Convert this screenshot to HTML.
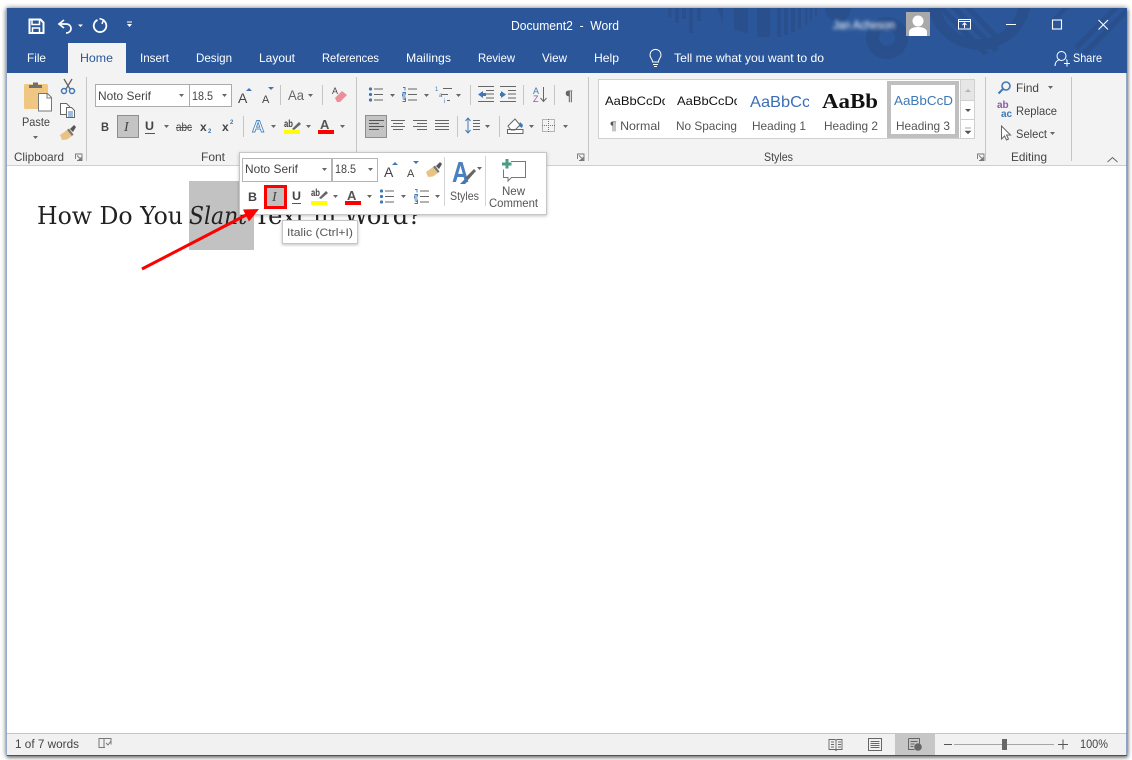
<!DOCTYPE html>
<html><head><meta charset="utf-8"><title>Document2 - Word</title>
<style>
html,body{margin:0;padding:0;background:#fff;width:1132px;height:760px;overflow:hidden}
#w{position:absolute;left:6px;top:8px;width:1121px;height:748px;box-shadow:0 0 5px rgba(0,0,0,.55),1px 2px 3px rgba(0,0,0,.3);background:#fff}
svg{position:absolute;left:0;top:0}
text{font-family:"Liberation Sans",sans-serif;font-size:12px;fill:#444}
.w{fill:#fff}
.l{fill:#555}
</style></head><body><div id="w"></div>
<svg width="1132" height="760" viewBox="0 0 1132 760" xmlns="http://www.w3.org/2000/svg">
<defs>
<path id="dd" d="M0 0h5l-2.5 3z" fill="#666"/>
<clipPath id="tb"><rect x="7" y="8" width="1120" height="65"/></clipPath>
<filter id="bl" x="-10%" y="-50%" width="120%" height="200%"><feGaussianBlur stdDeviation="1.8"/></filter>
<filter id="sh" x="-5%" y="-10%" width="110%" height="125%"><feDropShadow dx="0" dy="1" stdDeviation="1.5" flood-color="#000" flood-opacity=".25"/></filter>
<g id="bul"><g fill="#3f78b5"><circle cx="1.5" cy="1.5" r="1.6"/><circle cx="1.5" cy="7" r="1.6"/><circle cx="1.5" cy="12.5" r="1.6"/></g><path d="M5 1.5h9M5 7h9M5 12.5h9" stroke="#666" fill="none"/></g>
<g id="num"><path d="M6 1.5h9M6 7h9M6 12.5h9" stroke="#666" fill="none"/><path d="M1 0h2v3M0.5 5h3v1.5h-3v2h3M0.5 10.5h3v1.5h-2h2v2h-3" stroke="#3f78b5" fill="none" stroke-width=".9"/></g>
<g id="brush"><path d="M0 10l7-5 5 6-5 3.5-5 .5z" fill="#e9c383"/><path d="M7 5l5 6 1.5-1.5-4.5-6z" fill="#777"/><path d="M10 4l4-4 2 2-3 5z" fill="#555"/></g>
</defs>

<!-- window frame -->
<rect x="6.5" y="8" width="1120.5" height="748" fill="#2b579a"/>
<!-- title pattern -->
<g clip-path="url(#tb)" fill="#294f8c">
<path d="M668 8h3.500v9h-3.500zM675 8h4v15h-4zM682 8h4v11h-4zM689 8h4v25h-4zM697 8h4v13h-4z"/>
<path d="M717 8h6v15zM734 8h14v26l-14-5zM757 8h13v29h-13zM777 8h4v29h-4zM784 8h4v27h-4zM791 8h4v24h-4zM798 8h3v21h-3zM805 8h2.500v17h-2.500zM810 8h2v13h-2zM815 8h2v7h-2z"/>
<path d="M825 8h26c-1 9-6 14-13 14s-12-5-13-14z"/>
<path fill-rule="evenodd" d="M887 17a21 21 0 1 0 .1 0zM887 30a8 8 0 1 1-.1 0z"/>
<path fill-rule="evenodd" d="M928 8a52 52 0 0 0 102 0h-12a40 40 0 0 1-78 0z"/>
<path d="M938 8h7l44 45-6 2zM951 8h7l41 41-5 3zM965 8h7l32 33-4 4zM1003 8"/>
<path d="M1051 20l12-12h6l-16 16zM1074 46l38-38h7l-41 42zM1082 52l44-44v7l-39 40z"/>
</g>

<!-- QAT -->
<g fill="none" stroke="#fff">
<path d="M29.500 19.500h11l3 3v10.500h-14z" stroke-width="2"/>
<path d="M32 20v4.500h7.500v-4.500" stroke-width="1.500"/>
<path d="M32.500 33v-5h7v5" stroke-width="1.500"/>
<path d="M64 20l-5 4 5 4" stroke-width="1.700"/><path d="M59 24h7c3 0 5 2 5 4.500s-2 4.500-5 4.500" stroke-width="1.700"/>
<path d="M97.500 20A6.300 6.300 0 1 0 103.500 20.500" stroke-width="1.800"/>
<path d="M99.500 18.500l4 1.500-1.500 4" stroke-width="1.500"/>
</g>
<path d="M78 24.500h5l-2.500 2.500z" fill="#fff"/>
<path d="M127 21.500h5v1h-5zM127 24h5l-2.500 3z" fill="#fff"/>

<!-- Title -->
<text x="511" y="30" textLength="108" lengthAdjust="spacingAndGlyphs" class="w" style="font-size:13px" xml:space="preserve">Document2  -  Word</text>
<text x="833" y="29" textLength="62" lengthAdjust="spacingAndGlyphs" class="w" filter="url(#bl)" style="font-size:12px">Jan Acheson</text>
<rect x="906" y="12" width="24" height="24" fill="#a9a9a9"/>
<circle cx="918" cy="21" r="5.500" fill="#fff"/><path d="M909 36v-4c0-3 4-5 9-5s9 2 9 5v4z" fill="#fff"/>
<g fill="none" stroke="#fff">
<rect x="958.500" y="19.500" width="12" height="9.500"/><path d="M958.500 21.500h12" /><path d="M964.500 28v-5M962.500 25l2-2 2 2"/>
<path d="M1006 24.500h10"/><rect x="1052.500" y="20" width="9" height="9" stroke-width="1.100"/>
<path d="M1098.500 20l9.500 9.500M1108 20l-9.500 9.500" stroke-width="1.100"/>
</g>

<!-- Tabs -->
<rect x="68" y="43" width="58" height="30" fill="#f3f3f3"/>
<text x="27" y="62" textLength="19" lengthAdjust="spacingAndGlyphs" class="w">File</text>
<text x="80" y="62" textLength="33" lengthAdjust="spacingAndGlyphs" style="fill:#2b579a">Home</text>
<text x="140" y="62" textLength="29" lengthAdjust="spacingAndGlyphs" class="w">Insert</text>
<text x="196" y="62" textLength="36" lengthAdjust="spacingAndGlyphs" class="w">Design</text>
<text x="259" y="62" textLength="36" lengthAdjust="spacingAndGlyphs" class="w">Layout</text>
<text x="322" y="62" textLength="57" lengthAdjust="spacingAndGlyphs" class="w">References</text>
<text x="406" y="62" textLength="45" lengthAdjust="spacingAndGlyphs" class="w">Mailings</text>
<text x="478" y="62" textLength="37" lengthAdjust="spacingAndGlyphs" class="w">Review</text>
<text x="542" y="62" textLength="25" lengthAdjust="spacingAndGlyphs" class="w">View</text>
<text x="594" y="62" textLength="25" lengthAdjust="spacingAndGlyphs" class="w">Help</text>
<text x="674" y="62" textLength="150" lengthAdjust="spacingAndGlyphs" class="w">Tell me what you want to do</text>
<g fill="none" stroke="#fff"><path d="M652.500 62c0-2-.5-2.500-1.500-4a5.500 5.500 0 1 1 9 0c-1 1.500-1.500 2-1.500 4z"/><path d="M653 64.500h5M654 66.500h3"/></g>
<text x="1073" y="62" textLength="29" lengthAdjust="spacingAndGlyphs" class="w">Share</text>
<g fill="none" stroke="#fff"><circle cx="1061.500" cy="56" r="4.500"/><path d="M1055 66c0-4 2.500-6 5-6.500"/><path d="M1066 59.500c.5.300 1 .6 1.500 1M1064 63.500h6M1067 60.500v6"/></g>

<!-- Ribbon -->
<rect x="7" y="73" width="1119.500" height="93" fill="#f3f3f3"/>
<rect x="7" y="165" width="1119.500" height="1" fill="#cfcfcf"/>
<rect x="7" y="166" width="1119.500" height="567" fill="#fff"/>
<g stroke="#c6c6c6" fill="none">
<path d="M86.500 77v84M356.500 77v84M588.500 77v84M985.500 77v84M1071.500 77v84"/>
<path d="M280.500 85v20M322.500 85v20M243.500 116v21M470.500 85v20M523.500 85v20M554.500 85v20M457.500 116v21M499.500 116v21"/>
</g>

<!-- Clipboard -->
<rect x="24" y="84" width="24" height="25" rx="1.500" fill="#efc783"/>
<path d="M29 88v-3h4v-2.500h5v2.500h4v3z" fill="#6f6f6f"/>
<path d="M38.500 93.500h9l4 4v13.500h-13z" fill="#fff" stroke="#777"/><path d="M47 93.500v4.500h4.500" fill="none" stroke="#777"/>
<text x="22" y="126" textLength="28" lengthAdjust="spacingAndGlyphs">Paste</text>
<use href="#dd" x="33" y="136"/>
<g fill="none" stroke="#666" stroke-width="1.300"><path d="M64 79l6 10M72 79l-6 10"/></g>
<g fill="none" stroke="#3f78b5" stroke-width="1.500"><circle cx="64" cy="91" r="2.500"/><circle cx="72" cy="91" r="2.500"/></g>
<path d="M60.500 103.500h6l3 3v8h-9z" fill="#fff" stroke="#666"/>
<path d="M66.500 107.500h5l3 3v7h-8z" fill="#fff" stroke="#666"/><path d="M68 112h5M68 114h5M68 116h5" stroke="#3f78b5"/>
<use href="#brush" x="60" y="125"/>
<text x="14" y="161" textLength="50" lengthAdjust="spacingAndGlyphs">Clipboard</text>
<g fill="none" stroke="#777" stroke-width=".9"><path d="M75.500 159v-5h6.500v6.500h-5"/><path d="M77 155.500l4 4M81 157v2.500h-2.500"/></g>

<!-- Font group -->
<rect x="95.500" y="84.500" width="94" height="22" fill="#fff" stroke="#ababab"/>
<rect x="189.500" y="84.500" width="42" height="22" fill="#fff" stroke="#ababab"/>
<text x="98" y="100" textLength="53" lengthAdjust="spacingAndGlyphs">Noto Serif</text>
<text x="192" y="100" textLength="21" lengthAdjust="spacingAndGlyphs">18.5</text>
<use href="#dd" x="179" y="94"/><use href="#dd" x="222" y="94"/>
<text x="238" y="103" style="font-size:14px">A</text><path d="M246 91h6l-3-3z" fill="#3f78b5"/>
<text x="262" y="103" style="font-size:11px">A</text><path d="M268 87h6l-3 3z" fill="#3f78b5"/>
<text x="288" y="100" textLength="16" lengthAdjust="spacingAndGlyphs" style="font-size:14px;fill:#666">Aa</text><use href="#dd" x="308" y="94"/>
<text x="332" y="94" style="font-size:9px">A</text><path d="M335 98l7-7 5 4-7 7h-3z" fill="#ec8e95"/>
<text x="101" y="131" textLength="8" lengthAdjust="spacingAndGlyphs" style="font-weight:bold">B</text>
<rect x="117.500" y="115.500" width="21" height="22" fill="#c4c4c4" stroke="#8e8e8e"/>
<text x="124" y="131" style="font-family:'Liberation Serif',serif;font-style:italic;font-size:14px">I</text>
<text x="145" y="130" textLength="9" lengthAdjust="spacingAndGlyphs" style="font-weight:bold">U</text><path d="M145 133.500h10" stroke="#555"/>
<use href="#dd" x="164" y="125"/>
<text x="176" y="131" textLength="16" lengthAdjust="spacingAndGlyphs">abc</text><path d="M176 127.500h16" stroke="#555"/>
<text x="200" y="131" style="font-weight:bold">x</text><text x="208" y="133" style="font-size:6px;fill:#3f78b5;font-weight:bold">2</text>
<text x="222" y="131" style="font-weight:bold">x</text><text x="230" y="124" style="font-size:6px;fill:#3f78b5;font-weight:bold">2</text>
<text x="252" y="132" style="font-size:17px;font-weight:bold;fill:#fff;stroke:#4f86c0;stroke-width:.9">A</text>
<use href="#dd" x="271" y="125"/>
<text x="284" y="127" textLength="9" lengthAdjust="spacingAndGlyphs" style="font-size:10px;font-weight:bold">ab</text>
<path d="M292 129l7-7 2 2-7 6z" fill="#666"/>
<rect x="284" y="130" width="16" height="4" fill="#ff0"/><use href="#dd" x="306" y="125"/>
<text x="320" y="129" style="font-size:13px;font-weight:bold;fill:#555">A</text>
<rect x="318" y="130" width="16" height="4" fill="#f00"/><use href="#dd" x="340" y="125"/>
<text x="201" y="161" textLength="24" lengthAdjust="spacingAndGlyphs">Font</text>
<g fill="none" stroke="#777" stroke-width=".9"><path d="M577.500 159v-5h6.500v6.500h-5"/><path d="M579 155.500l4 4M583 157v2.500h-2.500"/></g>

<!-- Paragraph -->
<use href="#bul" x="369" y="87.500"/><use href="#dd" x="390" y="94"/>
<use href="#num" x="402" y="87.500"/><use href="#dd" x="424" y="94"/>
<path d="M443 88.500h9M441 94.500h7M447 100.500h3" stroke="#666"/>
<text x="435" y="91" style="font-size:6px;fill:#3f78b5">1</text><text x="439" y="97" style="font-size:6px;fill:#3f78b5">a</text><text x="444" y="103" style="font-size:6px;fill:#3f78b5">i</text>
<use href="#dd" x="456" y="94"/>
<path d="M486 89.500h8M486 93h8M486 97h8M478 100.500h16M478 85.500h16" stroke="#666" transform="translate(0 1)"/><path d="M478 94.500l5-3.500v2h3v3h-3v2z" fill="#3f78b5"/>
<path d="M500 86.500h16M508 90.500h8M508 94h8M508 98h8M500 101.500h16" stroke="#666"/><path d="M506 94.500l-5-3.500v2h-1v3h1v2z" fill="#3f78b5"/>
<text x="533" y="94" style="font-size:9px;fill:#3f78b5">A</text><text x="533" y="102" style="font-size:9px;fill:#8a5aa8">Z</text>
<path d="M543.500 87v14M540.500 98l3 3.500 3-3.500" stroke="#666" fill="none"/>
<text x="565" y="100" style="font-size:15px;font-family:'Liberation Serif',serif;fill:#666;font-weight:bold">¶</text>
<rect x="365.500" y="115.500" width="21" height="22" fill="#c4c4c4" stroke="#8e8e8e"/>
<path d="M369 120.500h15M369 123.500h10M369 126.500h15M369 129.500h10" stroke="#555"/>
<path d="M391 120.500h14M393 123.500h10M391 126.500h14M393 129.500h10" stroke="#666"/>
<path d="M413 120.500h14M417 123.500h10M413 126.500h14M417 129.500h10" stroke="#666"/>
<path d="M435 120.500h14M435 123.500h14M435 126.500h14M435 129.500h14" stroke="#666"/>
<path d="M468 118v15M465.500 121l2.500-3 2.500 3M465.500 130l2.500 3 2.500-3" stroke="#3f78b5" fill="none"/><path d="M473 120.500h7M473 123.500h7M473 126.500h7M473 129.500h7" stroke="#666"/>
<use href="#dd" x="485" y="125"/>
<path d="M508 126l7-7 5 6-5 5h-4zM507.500 129.500h15.500v4h-15.500z" fill="#fff" stroke="#666"/><path d="M520 122l3 3-1 3-3-2z" fill="#3f78b5"/>
<use href="#dd" x="529" y="125"/>
<rect x="542.500" y="119.500" width="12" height="12" fill="none" stroke="#777" stroke-dasharray="1 1"/><path d="M548.500 119v13M542 125.500h13" stroke="#777" stroke-dasharray="1 1"/>
<use href="#dd" x="563" y="125"/>
<g fill="none" stroke="#777" stroke-width=".9"><path d="M977.500 159v-5h6.500v6.500h-5"/><path d="M979 155.500l4 4M983 157v2.500h-2.500"/></g>

<!-- Styles -->
<rect x="598.500" y="79.500" width="376" height="59" fill="#fff" stroke="#d0d0d0"/>
<rect x="961" y="80" width="13" height="20" fill="#e6e6e6"/>
<path d="M960.500 80v58M960.500 100.500h14M960.500 119.500h14" stroke="#d0d0d0"/>
<path d="M965 92h6l-3-3z" fill="#b5b5b5"/><path d="M965 109h6l-3 3z" fill="#555"/><path d="M965 128h6M965 131h6l-3 3z" fill="#555" stroke="#555" stroke-width=".5"/>
<svg x="605" y="90" width="60" height="20"><text x="0" y="15" textLength="64" lengthAdjust="spacingAndGlyphs" style="fill:#111">AaBbCcDd</text></svg>
<svg x="677" y="90" width="60" height="20"><text x="0" y="15" textLength="64" lengthAdjust="spacingAndGlyphs" style="fill:#111">AaBbCcDd</text></svg>
<svg x="750" y="88" width="59" height="24"><text x="0" y="19" textLength="72" lengthAdjust="spacingAndGlyphs" style="font-size:16px;fill:#3a6fb5">AaBbCcD</text></svg>
<text x="822" y="108" textLength="56" lengthAdjust="spacingAndGlyphs" style="font-family:'Liberation Serif',serif;font-size:21px;font-weight:bold;fill:#111">AaBb</text>
<rect x="889" y="83" width="68" height="53" fill="#fff" stroke="#bfbfbf" stroke-width="4"/>
<text x="894" y="105" textLength="59" lengthAdjust="spacingAndGlyphs" style="font-size:13px;fill:#3f78b5">AaBbCcD</text>
<text x="610" y="130" textLength="50" lengthAdjust="spacingAndGlyphs" class="l">¶ Normal</text>
<text x="676" y="130" textLength="61" lengthAdjust="spacingAndGlyphs" class="l">No Spacing</text>
<text x="752" y="130" textLength="54" lengthAdjust="spacingAndGlyphs" class="l">Heading 1</text>
<text x="824" y="130" textLength="54" lengthAdjust="spacingAndGlyphs" class="l">Heading 2</text>
<text x="896" y="130" textLength="54" lengthAdjust="spacingAndGlyphs" class="l">Heading 3</text>
<text x="764" y="161" textLength="29" lengthAdjust="spacingAndGlyphs">Styles</text>

<!-- Editing -->
<g fill="none"><circle cx="1006" cy="86" r="4" stroke="#3f78b5" stroke-width="1.600"/><path d="M1003 89l-4.500 4.500" stroke="#3f78b5" stroke-width="2"/></g>
<text x="1016" y="92" textLength="23" lengthAdjust="spacingAndGlyphs">Find</text><use href="#dd" x="1048" y="86"/>
<text x="997" y="108" style="font-size:10px;font-weight:bold;fill:#8a5aa8">ab</text><text x="1001" y="117" style="font-size:10px;font-weight:bold;fill:#3f78b5">ac</text>
<text x="1016" y="115" textLength="41" lengthAdjust="spacingAndGlyphs">Replace</text>
<path d="M1001.500 126v13l3-3 2 4 2-1-2-4h4z" fill="#fff" stroke="#666"/>
<text x="1016" y="138" textLength="31" lengthAdjust="spacingAndGlyphs">Select</text><use href="#dd" x="1050" y="132"/>
<text x="1011" y="161" textLength="36" lengthAdjust="spacingAndGlyphs">Editing</text>
<path d="M1107.500 162l5-4.500 5 4.500" fill="none" stroke="#666"/>

<!-- Document -->
<rect x="189" y="181" width="65" height="69" fill="#c2c2c2"/>
<text x="37" y="224" textLength="146" lengthAdjust="spacingAndGlyphs" style="font-family:'DejaVu Serif',serif;font-size:24px;fill:#222">How Do You</text>
<text x="189" y="224" textLength="58" lengthAdjust="spacingAndGlyphs" style="font-family:'DejaVu Serif',serif;font-style:italic;font-size:24px;fill:#222">Slant</text>
<text x="254" y="224" textLength="167" lengthAdjust="spacingAndGlyphs" style="font-family:'DejaVu Serif',serif;font-size:24px;fill:#222">Text in Word?</text>

<!-- Mini toolbar -->
<rect x="239.500" y="152.500" width="307" height="62" fill="#fff" stroke="#c6c6c6" filter="url(#sh)"/>
<rect x="242.500" y="158.500" width="89" height="23" fill="#fff" stroke="#b5b5b5"/>
<rect x="332.500" y="158.500" width="45" height="23" fill="#fff" stroke="#b5b5b5"/>
<text x="245" y="173" textLength="53" lengthAdjust="spacingAndGlyphs">Noto Serif</text>
<text x="335" y="173" textLength="21" lengthAdjust="spacingAndGlyphs">18.5</text>
<use href="#dd" x="322" y="168"/><use href="#dd" x="368" y="168"/>
<text x="384" y="177" style="font-size:14px">A</text><path d="M392 165h6l-3-3z" fill="#3f78b5"/>
<text x="407" y="177" style="font-size:11px">A</text><path d="M413 161h6l-3 3z" fill="#3f78b5"/>
<use href="#brush" x="426" y="162"/>
<path d="M444.500 157v49M485.500 156v50" stroke="#d5d5d5"/>
<text x="248" y="201" textLength="9" lengthAdjust="spacingAndGlyphs" style="font-weight:bold">B</text>
<rect x="265.500" y="186.500" width="20" height="21" fill="#c0c0c0" stroke="#f00" stroke-width="3"/>
<text x="272" y="201" style="font-family:'Liberation Serif',serif;font-style:italic;font-size:14px">I</text>
<text x="292" y="200" textLength="9" lengthAdjust="spacingAndGlyphs" style="font-weight:bold">U</text><path d="M292 203.500h9" stroke="#555"/>
<text x="311" y="196" textLength="9" lengthAdjust="spacingAndGlyphs" style="font-size:10px;font-weight:bold">ab</text>
<path d="M319 198l7-7 2 2-7 6z" fill="#666"/>
<rect x="311" y="201" width="16" height="4" fill="#ff0"/><use href="#dd" x="333" y="195"/>
<text x="347" y="200" style="font-size:13px;font-weight:bold;fill:#555">A</text>
<rect x="345" y="201" width="16" height="4" fill="#f00"/><use href="#dd" x="367" y="195"/>
<use href="#bul" x="380" y="189.500"/><use href="#dd" x="401" y="195"/>
<use href="#num" x="414" y="189.500"/><use href="#dd" x="435" y="195"/>
<text x="452" y="182" textLength="17" lengthAdjust="spacingAndGlyphs" style="font-size:29px;font-weight:bold;fill:#4a80bd">A</text>
<path d="M465 178l9-9 2 2-8 9z" fill="#666"/><path d="M460 184l5-5 3 2-3 3z" fill="#3f78b5"/>
<use href="#dd" x="477" y="167"/>
<text x="450" y="200" textLength="29" lengthAdjust="spacingAndGlyphs" class="l">Styles</text>
<path d="M511 161.500h14.500v16h-14l-3.500 3.500v-3.500h-4.500v-8" fill="#fff" stroke="#777"/>
<path d="M502 162.500h3.500v-3.500h3v3.500h3v3h-3v3h-3v-3h-3.500z" fill="#4f9b85"/>
<text x="502" y="195" textLength="23" lengthAdjust="spacingAndGlyphs" class="l">New</text>
<text x="489" y="207" textLength="49" lengthAdjust="spacingAndGlyphs" class="l">Comment</text>

<!-- Arrow -->
<path d="M142 269L250 213" stroke="#f00" stroke-width="3" fill="none"/>
<path d="M259 209L243 209.500l6 12z" fill="#f00"/>

<!-- Tooltip -->
<rect x="282.500" y="220.500" width="75" height="23" fill="#fff" stroke="#c6c6c6" filter="url(#sh)"/>
<text x="287" y="236" textLength="66" lengthAdjust="spacingAndGlyphs" style="font-size:11px" class="l">Italic (Ctrl+I)</text>

<!-- Status bar -->
<rect x="7" y="733" width="1119.500" height="22" fill="#f1f1f1"/>
<rect x="7" y="733" width="1119.500" height="1" fill="#c6c6c6"/>
<text x="15" y="748" textLength="64" lengthAdjust="spacingAndGlyphs" style="font-size:11.500px">1 of 7 words</text>
<path d="M99 738.500h5v9h-5zM104 738.500h7v6M104 747.500h1" fill="none" stroke="#777"/><path d="M106 743l2 2 3-4" fill="none" stroke="#777"/>
<rect x="895" y="734" width="40" height="21" fill="#c6c6c6"/>
<path d="M829 739.500h6l1 1 1-1h5v10h-5l-1 1-1-1h-6zM836 740v10M831 742h3M831 744.500h3M831 747h3M838 742h3M838 744.500h3M838 747h3" fill="none" stroke="#666" stroke-width=".9"/>
<rect x="868.500" y="738.500" width="13" height="12" fill="none" stroke="#666"/><path d="M870.500 741.500h9M870.500 743.500h9M870.500 745.500h9M870.500 747.500h9" stroke="#666"/>
<path d="M908.500 738.500h11v5M908.500 738.500v11h6M910.500 741.500h7M910.500 744h4M910.500 746.500h3" fill="none" stroke="#666"/><circle cx="918" cy="747" r="3.800" fill="#666"/>
<path d="M941 744.500h8" stroke="#555" transform="translate(3 0)"/>
<rect x="954" y="744" width="100" height="1" fill="#a6a6a6"/>
<rect x="1002" y="739" width="5" height="11" fill="#666"/>
<path d="M1058 744.500h10M1063 739.500v10" stroke="#555"/>
<text x="1080" y="748" textLength="28" lengthAdjust="spacingAndGlyphs" style="font-size:11.500px">100%</text>
</svg>
</body></html>
